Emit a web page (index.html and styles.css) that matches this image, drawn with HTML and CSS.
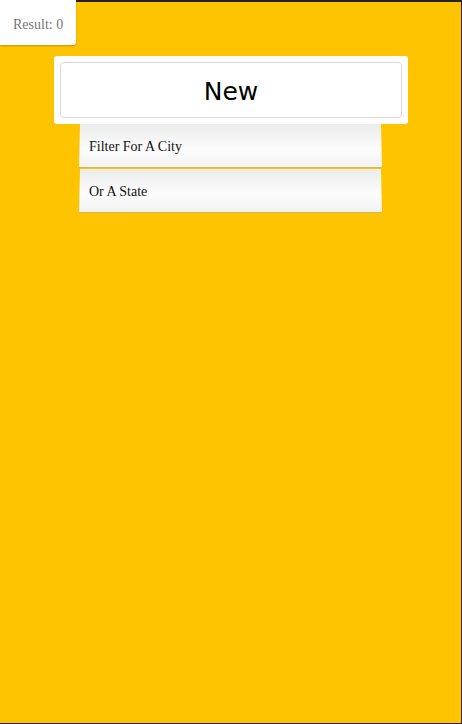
FILE: index.html
```html
<!DOCTYPE html>
<html>
<head>
<meta charset="utf-8">
<link rel="stylesheet" href="styles.css">
</head>
<body>
<div class="frame">
  <div class="result">Result: 0</div>
  <div class="card">
    <div class="input">New</div>
  </div>
  <ul class="list">
    <li class="item">Filter For A City</li>
    <li class="item">Or A State</li>
  </ul>
</div>
</body>
</html>
```

FILE: styles.css
```css
html, body {
  margin: 0;
  padding: 0;
  height: 100%;
}
body {
  background: #ffc400;
  font-family: "Liberation Serif", serif;
}
.frame {
  box-sizing: border-box;
  height: 724px;
  width: 462px;
  border-top: 2px solid #222;
  border-right: 1px solid #222;
  border-bottom: 1px solid #222;
  position: relative;
  display: flex;
  flex-direction: column;
  align-items: center;
}
.result {
  position: absolute;
  left: 0;
  top: -2px;
  width: 76px;
  height: 45px;
  box-sizing: border-box;
  background: #fff;
  border-bottom-right-radius: 3px;
  box-shadow: 0 1px 2px rgba(0,0,0,0.25);
  color: #777;
  font-size: 14px;
  line-height: 20px;
  padding-top: 15px;
  padding-left: 13px;
}
.card {
  margin-top: 54px;
  margin-left: 1px;
  width: 354px;
  height: 68px;
  box-sizing: border-box;
  background: #fff;
  border-radius: 3px;
  padding: 6px;
}
.input {
  height: 56px;
  box-sizing: border-box;
  border: 1px solid #d9d9d9;
  border-radius: 4px;
  font-family: "DejaVu Sans", sans-serif;
  font-size: 25px;
  text-align: center;
  line-height: 58px;
  color: #000;
}
.list {
  list-style: none;
  margin: 0;
  padding: 0;
  width: 303px;
}
.item {
  height: 44px;
  box-sizing: border-box;
  padding-left: 10px;
  padding-top: 2px;
  line-height: 42px;
  font-size: 14px;
  color: #111;
  background: linear-gradient(#ececec, #fcfcfc 60%, #f2f2f2);
  border-bottom: 1px solid #d8b660;
  box-shadow: 0 1px 1px rgba(0,0,0,0.15);
  clip-path: polygon(1px 0, calc(100% - 1px) 0, 100% 100%, 0 100%);
}
.item + .item {
  margin-top: 1px;
}
```
